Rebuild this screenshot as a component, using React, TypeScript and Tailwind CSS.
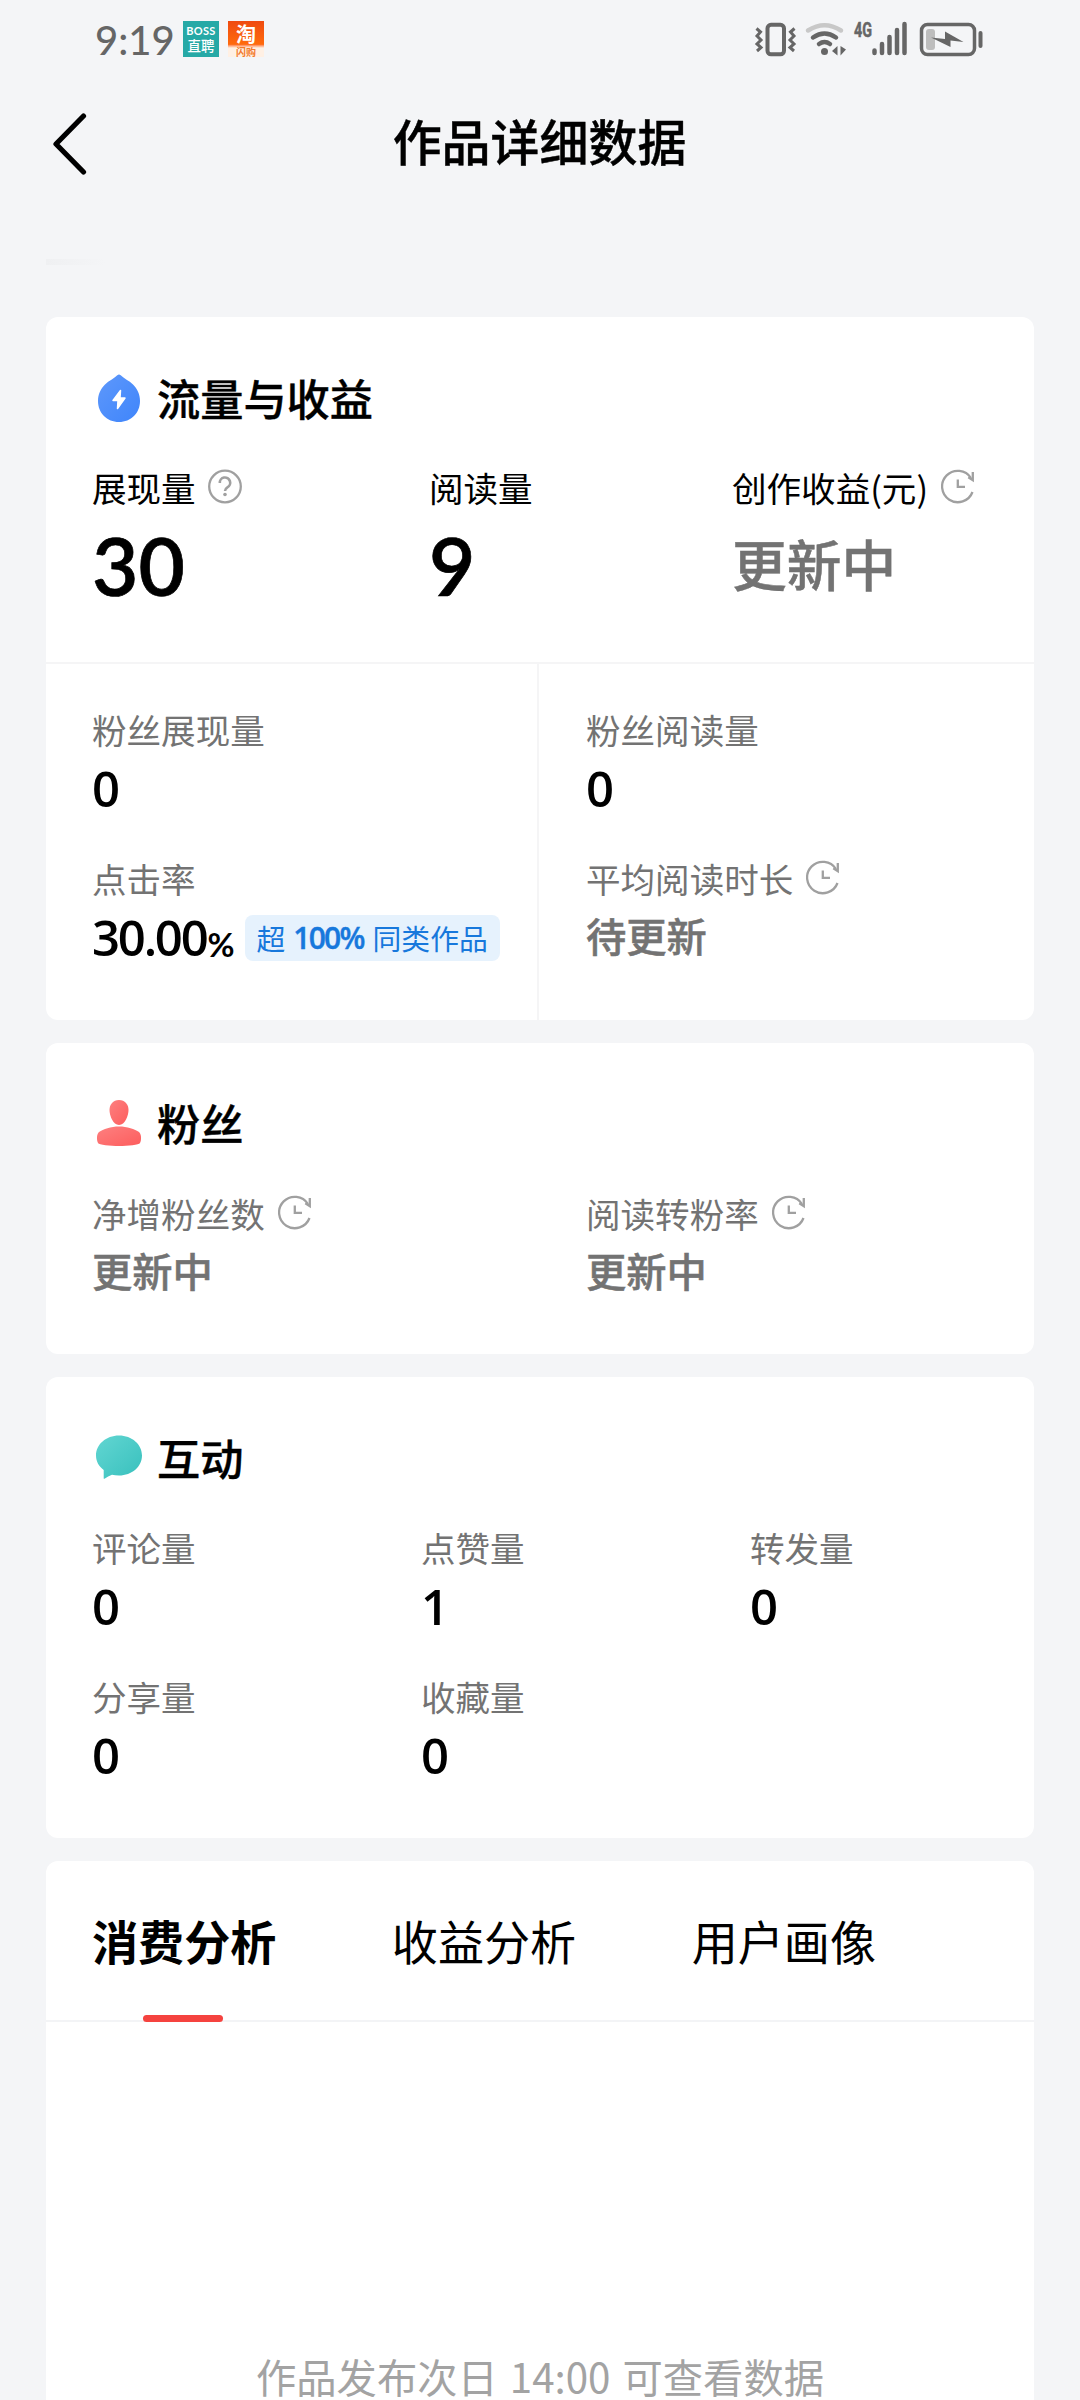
import React, { useState } from 'react';

type Metric = {
  label: string;
  value: string;
  pending?: boolean;
};

const tabs = ["消费分析", "收益分析", "用户画像"];

const interactionData: Metric[] = [
  { label: "评论量", value: "0" },
  { label: "点赞量", value: "1" },
  { label: "转发量", value: "0" },
  { label: "分享量", value: "0" },
  { label: "收藏量", value: "0" },
];

const fansData: Metric[] = [
  { label: "净增粉丝数", value: "更新中", pending: true },
  { label: "阅读转粉率", value: "更新中", pending: true },
];

const PendingIcon: React.FC = () => (
  <svg className="mb-1 ml-[13px] h-[35px] w-[34px] shrink-0" viewBox="0 0 34 35" fill="none" stroke="#a0a0a0" strokeWidth="2.3">
    <path d="M31.5 23A15.7 15.7 0 1 1 30 9" />
    <path d="M31.800 3v8.200l-4.500-3M16.800 10.500v7.300h7.200" />
  </svg>
);

const QuestionIcon: React.FC = () => (
  <svg className="mb-1 ml-3 h-[35px] w-[34px] shrink-0" viewBox="0 0 34 35" fill="none" stroke="#a0a0a0" strokeWidth="2.3">
    <circle cx="17" cy="17.5" r="15.8" />
    <path d="M11.8 14a5.2 5.2 0 1 1 7.6 4.3c-1.7 1-2.4 1.8-2.4 3.7" strokeWidth="2.6" />
    <circle cx="17" cy="25.5" r="1.8" fill="#a0a0a0" stroke="none" />
  </svg>
);

const TrafficIcon: React.FC = () => (
  <svg className="h-12 w-12" viewBox="0 0 48 48">
    <defs>
      <linearGradient id="traffic" x1="0" y1="0" x2="1" y2="1">
        <stop offset="0" stopColor="#5e98fb" />
        <stop offset="1" stopColor="#3f85fb" />
      </linearGradient>
    </defs>
    <path d="M22.3 1.2q1.7-1.4 3.4 0C29 4.500 34 6.500 38 10.500C42.500 15 45 20.500 45 27C45 39 36 48 24 48S3 39 3 27C3 20.500 5.500 15 10 10.500C14 6.500 19 4.500 22.300 1.200Z" fill="url(#traffic)" />
    <path d="M25.500 16.500L18 26.500h5L22.500 34.500l7.500-10.500h-5z" fill="#fff" stroke="#fff" strokeWidth="1.5" strokeLinejoin="round" />
  </svg>
);

const FansIcon: React.FC = () => (
  <svg className="h-12 w-12" viewBox="0 0 48 48">
    <defs>
      <linearGradient id="fans" x1="0" y1="0" x2="1" y2="1">
        <stop offset="0" stopColor="#fd8080" />
        <stop offset="1" stopColor="#fd5d5d" />
      </linearGradient>
    </defs>
    <path d="M24 1c6 0 9.500 4.500 9.500 10S30 26 24 26s-9.500-9.500-9.500-15S18 1 24 1Z" fill="url(#fans)" />
    <path d="M24 27.500c8 0 16 2.500 20 5.500c2.500 2 2.500 8 1 11c-1 2-12 3-21 3s-20-1-21-3c-1.500-3-1.500-9 1-11c4-3 12-5.500 20-5.500Z" fill="url(#fans)" />
  </svg>
);

const InteractionIcon: React.FC = () => (
  <svg className="h-12 w-12" viewBox="0 0 48 48">
    <defs>
      <linearGradient id="interaction" x1="0" y1="0" x2="1" y2="1">
        <stop offset="0" stopColor="#62d6d2" />
        <stop offset="1" stopColor="#38c0bd" />
      </linearGradient>
    </defs>
    <path d="M24 1.500C37 1.500 47 10.500 47 21.500S37 41.500 24 41.500q-4 0-7-.8q-4 1.500-7.500 4q-.8.500-.8-.5L8.700 36C4 32.500 1 27.500 1 21.500C1 10.500 11 1.500 24 1.500Z" fill="url(#interaction)" />
  </svg>
);

const StatusBar: React.FC = () => (
  <div className="flex h-[78px] items-center justify-between pr-[96px] pl-[95px] text-[#666]">
    <div className="flex items-center">
      <span className="w-[88px] pt-0.5 font-['Lato'] text-[40px] leading-none font-medium">9:19</span>
      <div className="flex h-9 w-9 flex-col items-center bg-[#26a9a6] pt-0.5 text-white">
        <span className="font-['Lato'] text-[11px] leading-[15px] font-bold tracking-[0.3px]">BOSS</span>
        <span className="text-[13.500px] leading-[15px] font-medium">直聘</span>
      </div>
      <div className="ml-[9px] flex h-9 w-9 flex-col items-center bg-gradient-to-b from-[#ef4a10] from-0% via-[#ff6a0c] via-65% to-[#fff0e4] to-75%">
        <span className="text-[20px] leading-[26px] font-bold text-white">淘</span>
        <span className="text-[10px] leading-[10px] font-bold text-[#f27a2c]">闪购</span>
      </div>
    </div>
    <svg className="h-9 w-[230px] overflow-visible" viewBox="754 21 230 36" fill="none" stroke="#666" strokeWidth="3.500">
      <rect x="767.500" y="24.800" width="16.500" height="29.500" rx="3.500" strokeWidth="4" />
      <path d="M756.500 28.500l4 3.500-3.500 4 4 4-4 4 4 3.500-4 3.500M794.500 28.500l-4 3.500 3.500 4-4 4 4 4-4 3.500 4 3.500" strokeWidth="3" />
      <path d="M808 30.500q16.500-10.500 33 0" stroke="#c8c8c8" strokeWidth="4.500" strokeLinecap="round" />
      <path d="M813 37.500q11.500-8 23 0M819 44q5.500-4 11 0" strokeWidth="4.500" strokeLinecap="round" />
      <circle cx="824.500" cy="51.500" r="3.500" fill="#666" stroke="none" />
      <path d="M837.500 46v9.500l-5.500-4.500zM840.500 46v9.500l5.500-6z" fill="#666" stroke="none" />
      <text x="854" y="36.500" fill="#666" stroke="#666" strokeWidth="0.5" fontFamily="Roboto" fontSize="20" fontWeight="700" textLength="18" lengthAdjust="spacingAndGlyphs">4G</text>
      <path d="M874.500 50.500v2.500M882 44v9M889.500 37v16M897 30v23M904.500 24v29" strokeWidth="4.500" strokeLinecap="round" />
      <rect x="921.500" y="24.500" width="53" height="30" rx="6" />
      <rect x="926" y="29" width="9" height="21" rx="3" fill="#bdbdbd" stroke="none" />
      <path d="M931 37.500l14 1.500v-7.500l18.500 10.500-13-1.500v6.500z" fill="#666" stroke="none" />
      <path d="M980.500 33v13" strokeWidth="4" strokeLinecap="round" />
    </svg>
  </div>
);

const CardTitle: React.FC<{ icon: React.ReactNode; title: string }> = ({ icon, title }) => (
  <div className="flex h-12 items-center gap-3.5 pl-[3px]">
    {icon}
    <h2 className="pb-[3px] text-[43.2px] leading-[48px] font-medium [-webkit-text-stroke:0.4px]">{title}</h2>
  </div>
);

const MetricCell: React.FC<{ item: Metric; icon?: boolean; children?: React.ReactNode }> = ({ item, icon, children }) => (
  <div>
    <div className="flex h-12 items-center text-[34.56px] text-[#737373]">
      {item.label}
      {icon && <PendingIcon />}
    </div>
    <div className="mt-2 flex h-[52px] items-center">
      {item.pending ? (
        <span className="pb-[3px] text-[40.3px] leading-none font-medium text-[#737373] [-webkit-text-stroke:0.5px]">{item.value}</span>
      ) : (
        <span className="font-['Open_Sans'] text-[49px] leading-none font-semibold tracking-[-2.2px]">{item.value}</span>
      )}
      {children}
    </div>
  </div>
);

const App: React.FC = () => {
  const [activeTab, setActiveTab] = useState(0);

  return (
    <div className="h-[2400px] w-[1080px] overflow-hidden bg-[#f4f5f7] font-['Noto_Sans_CJK_SC',sans-serif] text-black">
      <StatusBar />
      <header className="flex h-[130px] items-center px-[53px] pt-px">
        <svg className="h-[62px] w-[34px]" viewBox="0 0 34 62" fill="none" stroke="#000" strokeWidth="5.200" strokeLinecap="round" strokeLinejoin="round">
          <path d="M30.500 3L3 31L30.500 59" />
        </svg>
        <h1 className="flex-1 pr-[35px] pb-[7px] text-center text-[48.96px] leading-[60px] font-medium [-webkit-text-stroke:0.4px]">作品详细数据</h1>
      </header>
      <div className="mt-[51px] ml-[46px] h-[6px] w-[60px] bg-gradient-to-r from-[#eff0f2] to-transparent" />
      <main className="mx-[46px] mt-[52px] flex flex-col gap-[23px]">
        <section className="h-[703px] rounded-xl bg-white">
          <div className="h-[345px] px-[46px] pt-[57px]">
            <CardTitle icon={<TrafficIcon />} title="流量与收益" />
            <div className="mt-[42px] flex">
              <div className="w-[337px]">
                <div className="flex h-12 items-center text-[34.56px]">展现量<QuestionIcon /></div>
                <div className="mt-4 flex h-[72px] items-center pt-px font-['Lato'] text-[80px] leading-none font-semibold [-webkit-text-stroke:0.7px]">30</div>
              </div>
              <div className="w-[303px]">
                <div className="flex h-12 items-center text-[34.56px]">阅读量</div>
                <div className="mt-4 flex h-[72px] items-center pt-px font-['Lato'] text-[80px] leading-none font-semibold [-webkit-text-stroke:0.7px]">9</div>
              </div>
              <div>
                <div className="flex h-12 items-center text-[34.56px] whitespace-nowrap">创作收益(元)<PendingIcon /></div>
                <div className="mt-4 flex h-[72px] items-center pb-0.5 text-[54.7px] leading-none font-medium text-[#737373] [-webkit-text-stroke:0.5px]">更新中</div>
              </div>
            </div>
          </div>
          <div className="flex h-[358px] border-t-2 border-[#f5f5f6]">
            <div className="flex w-[493px] flex-col gap-[41px] border-r-2 border-[#f5f5f6] pt-[42px] pl-[46px]">
              <MetricCell item={{ label: "粉丝展现量", value: "0" }} />
              <MetricCell item={{ label: "点击率", value: "30.00" }}>
                <span className="mt-3.5 ml-px font-['Lato'] text-[33px] leading-none font-bold">%</span>
                <span className="mt-px ml-2.5 flex h-[46px] items-center rounded-lg bg-[#e6f2fd] px-3 text-[28.8px] whitespace-nowrap text-[#1778dc]">
                  超<b className="mr-[9px] ml-2 font-['Open_Sans'] text-[30px] font-semibold tracking-[-1.8px] [-webkit-text-stroke:0.4px]">100%</b>同类作品
                </span>
              </MetricCell>
            </div>
            <div className="flex flex-col gap-[41px] pt-[42px] pl-[47px]">
              <MetricCell item={{ label: "粉丝阅读量", value: "0" }} />
              <MetricCell item={{ label: "平均阅读时长", value: "待更新", pending: true }} icon />
            </div>
          </div>
        </section>

        <section className="h-[311px] rounded-xl bg-white px-[46px] pt-[56px]">
          <CardTitle icon={<FansIcon />} title="粉丝" />
          <div className="mt-[43px] flex">
            {fansData.map(item => (
              <div key={item.label} className="w-[494px] shrink-0">
                <MetricCell item={item} icon />
              </div>
            ))}
          </div>
        </section>

        <section className="h-[461px] rounded-xl bg-white pt-[57px] pl-[46px]">
          <CardTitle icon={<InteractionIcon />} title="互动" />
          <div className="mt-[42px] flex flex-wrap gap-y-[41px]">
            {interactionData.map(item => (
              <div key={item.label} className="w-[329px] nth-[3n]:w-[250px]">
                <MetricCell item={item} />
              </div>
            ))}
          </div>
        </section>

        <section className="h-[540px] shrink-0 rounded-t-xl bg-white">
          <div className="flex h-[161px] gap-[115.5px] border-b-2 border-[#f3f4f6] pl-[46px]">
            {tabs.map((tab, index) => (
              <button
                key={tab}
                className={index === activeTab ? "relative text-[46.08px] font-bold" : "relative text-[46.08px]"}
                onClick={() => setActiveTab(index)}
              >
                {tab}
                {index === activeTab && (
                  <span className="absolute -bottom-0.5 left-[51px] h-[7px] w-[80px] rounded-sm bg-[#f5433f]" />
                )}
              </button>
            ))}
          </div>
          <p className="mt-[334px] text-center text-[40.3px] leading-10 text-[#a3a3a3] [word-spacing:3px]">作品发布次日 14:00 可查看数据</p>
        </section>
      </main>
    </div>
  );
};

export default App;
